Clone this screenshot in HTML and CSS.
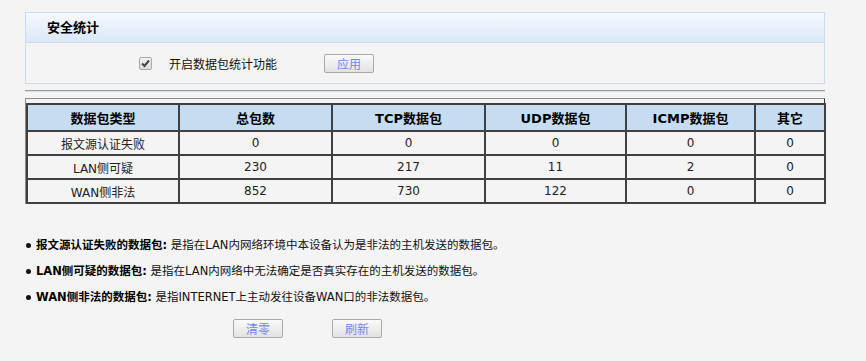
FILE: index.html
```html
<!DOCTYPE html>
<html lang="zh-CN">
<head>
    <meta charset="UTF-8">
    <title>安全统计</title>
    <link rel="stylesheet" href="styles.css">
</head>
<body>
    <div class="page">
        <div class="panel">
            <div class="panel-title">安全统计</div>
            <div class="panel-body">
                <span class="check">
                    <svg width="9" height="9" viewBox="0 0 9 9"><path d="M1 4.5 L3.5 7 L8 1.5" fill="none" stroke="#444" stroke-width="2"/></svg>
                </span>
                <span class="check-label">开启数据包统计功能</span>
                <button class="btn">应用</button>
            </div>
        </div>

        <div class="divider"></div>

        <div class="stat-wrap">
            <table class="stat">
                <colgroup>
                    <col class="c1">
                    <col class="c2">
                    <col class="c3">
                    <col class="c4">
                    <col class="c5">
                    <col class="c6">
                </colgroup>
                <thead>
                    <tr>
                        <th>数据包类型</th>
                        <th>总包数</th>
                        <th>TCP数据包</th>
                        <th>UDP数据包</th>
                        <th>ICMP数据包</th>
                        <th>其它</th>
                    </tr>
                </thead>
                <tbody>
                    <tr><td>报文源认证失败</td><td>0</td><td>0</td><td>0</td><td>0</td><td>0</td></tr>
                    <tr><td>LAN侧可疑</td><td>230</td><td>217</td><td>11</td><td>2</td><td>0</td></tr>
                    <tr><td>WAN侧非法</td><td>852</td><td>730</td><td>122</td><td>0</td><td>0</td></tr>
                </tbody>
            </table>
        </div>

        <ul class="notes">
            <li><b>报文源认证失败的数据包:</b> 是指在LAN内网络环境中本设备认为是非法的主机发送的数据包。</li>
            <li><b>LAN侧可疑的数据包:</b> 是指在LAN内网络中无法确定是否真实存在的主机发送的数据包。</li>
            <li><b>WAN侧非法的数据包:</b> 是指INTERNET上主动发往设备WAN口的非法数据包。</li>
        </ul>

        <div class="actions">
            <button class="btn">清零</button>
            <button class="btn">刷新</button>
        </div>
    </div>
</body>
</html>
```

FILE: styles.css
```css
body {
    margin: 0;
    background-color: #f4f4f4;
    font-family: "DejaVu Sans", "Noto Sans CJK SC", sans-serif;
    font-size: 12px;
    color: #222;
}

.page {
    width: 800px;
    padding: 12px 0 0 25px;
}

.panel {
    border: 1px solid #c7dcef;
}

.panel-title {
    height: 29px;
    line-height: 29px;
    padding-left: 21px;
    font-size: 13px;
    font-weight: bold;
    color: #000;
    border-bottom: 1px solid #c7dcef;
    background: linear-gradient(#f6f9fe, #dbe8f8);
}

.panel-body {
    height: 40px;
    display: flex;
    align-items: center;
}

.check {
    width: 11px;
    height: 11px;
    margin-left: 113px;
    border: 1px solid #a8a8a8;
    border-radius: 2px;
    background: linear-gradient(#f2f2f2, #dcdcdc);
    display: flex;
    align-items: center;
    justify-content: center;
}

.check-label {
    margin-left: 17px;
    color: #111;
}

.btn {
    width: 50px;
    height: 19px;
    padding: 0;
    border: 1px solid #a9a9a9;
    border-radius: 2px;
    background: linear-gradient(#fafafa, #e2e2e2);
    color: #7585ee;
    font-family: "DejaVu Sans", "Noto Sans CJK SC", sans-serif;
    font-size: 12px;
}

.panel-body .btn {
    margin-left: 47px;
}

.divider {
    margin-top: 6px;
    height: 1px;
    background-color: #9a9a9a;
    border-bottom: 1px solid #dedede;
}

.stat-wrap {
    margin-top: 6px;
    padding-top: 4px;
    border-top: 1px solid #8a8a8a;
    border-left: 1px solid #8a8a8a;
    border-right: 1px solid #333;
}

.stat {
    width: 100%;
    border-collapse: collapse;
    table-layout: fixed;
}

.stat th, .stat td {
    border: 2px solid #404040;
    text-align: center;
    padding: 0;
}

.stat th {
    height: 25px;
    background-color: #c6dcf0;
    font-size: 13px;
    color: #000;
}

.stat td {
    height: 22px;
    color: #222;
}

.c1 { width: 152px; }
.c2, .c3 { width: 153px; }
.c4 { width: 141px; }
.c5 { width: 129px; }
.c6 { width: 70px; }

.notes {
    list-style: none;
    margin: 32px 0 0 0;
    padding: 0;
    font-size: 11.5px;
}

.notes li {
    position: relative;
    padding-left: 11px;
    height: 26px;
    line-height: 18px;
    color: #111;
}

.notes li::before {
    content: "";
    position: absolute;
    left: 1px;
    top: 7px;
    width: 5px;
    height: 5px;
    border-radius: 50%;
    background-color: #111;
}

.notes b {
    color: #000;
}

.actions {
    display: flex;
    gap: 49px;
    padding-left: 208px;
    margin-top: 5px;
}
```
